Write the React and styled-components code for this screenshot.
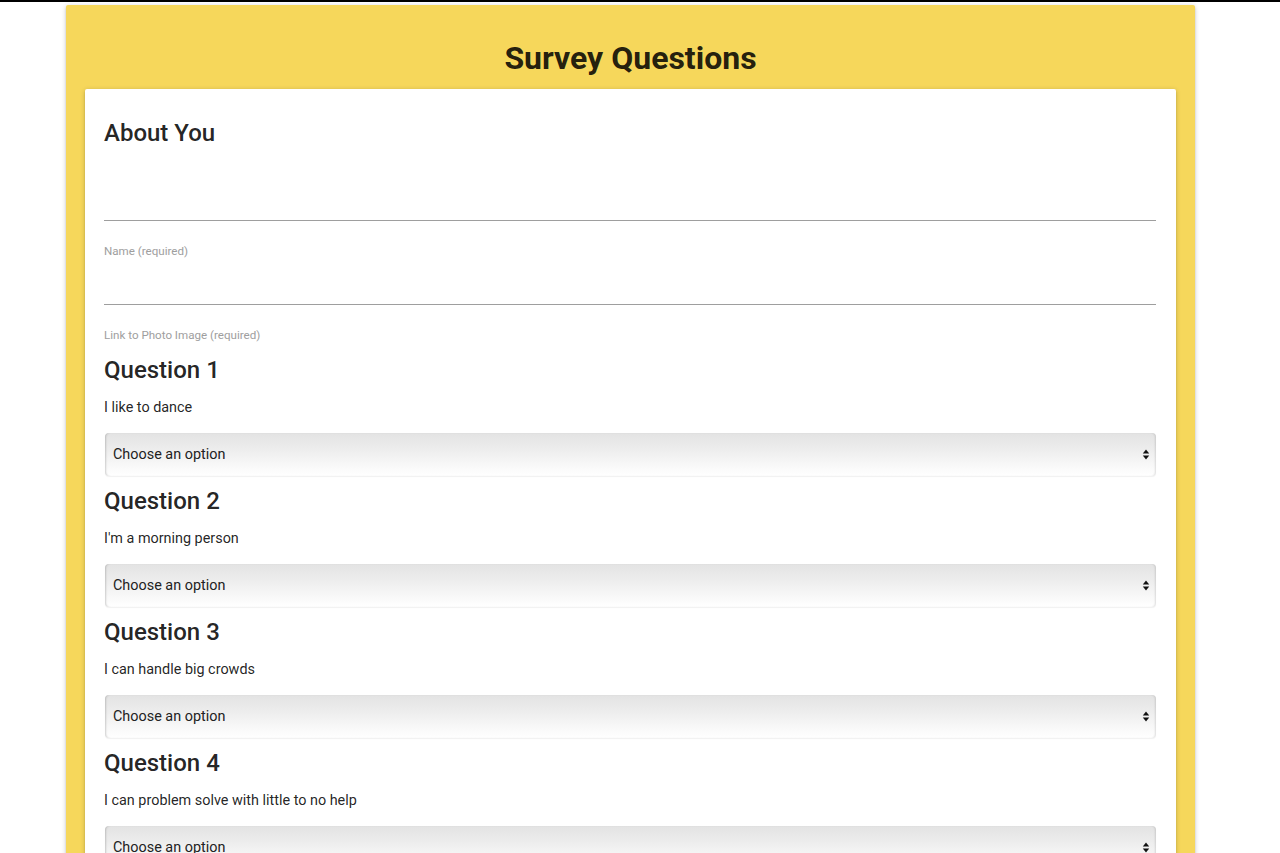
import React from "react";
import styled, { createGlobalStyle } from "styled-components";

const GlobalStyle = createGlobalStyle`
  html, body { margin: 0; padding: 0; background: #ffffff; }
  body { font-family: Roboto, "Liberation Sans", Arial, sans-serif; color: rgba(0,0,0,0.87); }
  * { box-sizing: border-box; }
`;

const TopBar = styled.div`
  height: 2px;
  background: #000;
`;

const Page = styled.div`
  padding: 3px 0 0 66px;
`;

const Panel = styled.section`
  width: 1129px;
  background: #f6d75b;
  border-radius: 2px;
  box-shadow: 0 2px 2px 0 rgba(0,0,0,0.14), 0 3px 1px -2px rgba(0,0,0,0.12), 0 1px 5px 0 rgba(0,0,0,0.2);
  padding: 0 19px 40px 19px;
`;

const Title = styled.h1`
  margin: 0;
  height: 84px;
  display: flex;
  align-items: flex-end;
  justify-content: center;
  padding-bottom: 13px;
  font-size: 32px;
  line-height: 36px;
  font-weight: 700;
  color: rgba(0,0,0,0.87);
`;

const Card = styled.form`
  background: #fff;
  border-radius: 2px;
  box-shadow: 0 2px 2px 0 rgba(0,0,0,0.14), 0 3px 1px -2px rgba(0,0,0,0.12), 0 1px 5px 0 rgba(0,0,0,0.2);
  padding: 30px 20px 30px 19px;
  display: flex;
  flex-direction: column;
`;

const SectionTitle = styled.h2`
  margin: 0;
  font-size: 24px;
  line-height: 28px;
  font-weight: 500;
  color: rgba(0,0,0,0.87);
`;

const TextInput = styled.input`
  display: block;
  width: 100%;
  height: 46px;
  margin-top: ${p => p.$top}px;
  border: none;
  border-bottom: 1px solid #9e9e9e;
  background: transparent;
  outline: none;
  font: inherit;
  font-size: 16px;
  padding: 0;
`;

const FieldLabel = styled.label`
  display: block;
  margin-top: 22px;
  font-size: 11.6px;
  line-height: 16px;
  color: #9e9e9e;
`;

const QuestionBlock = styled.div`
  display: flex;
  flex-direction: column;
  margin-top: ${p => p.$top}px;
`;

const Prompt = styled.p`
  margin: 14px 0 0 0;
  font-size: 14.4px;
  line-height: 20px;
  color: rgba(0,0,0,0.87);
`;

const SelectWrap = styled.div`
  position: relative;
  margin: 15px 0 0 1px;
`;

const Select = styled.select`
  appearance: none;
  -webkit-appearance: none;
  display: block;
  width: 100%;
  height: 43px;
  border: none;
  border-radius: 4px;
  padding: 0 30px 0 8px;
  font-family: Roboto, "Liberation Sans", Arial, sans-serif;
  font-size: 14.4px;
  color: #222;
  background: linear-gradient(to bottom, #e3e3e3 0%, #ececec 35%, #f8f8f8 75%, #ffffff 100%);
  box-shadow: inset 2px 0 2px -1px rgba(0,0,0,0.18), inset -2px 0 2px -1px rgba(0,0,0,0.12), 0 1px 1px rgba(0,0,0,0.06);
  outline: none;
`;

const Arrows = styled.svg`
  position: absolute;
  right: 6px;
  top: 16px;
  width: 8px;
  height: 11px;
  pointer-events: none;
`;

const questions = [
  "I like to dance",
  "I'm a morning person",
  "I can handle big crowds",
  "I can problem solve with little to no help",
  "I enjoy meeting new people",
  "I like to plan ahead",
  "I prefer working in a team",
  "I enjoy outdoor activities",
  "I like trying new foods",
  "I stay calm under pressure",
];

function Question({ n, text, top }) {
  return (
    <QuestionBlock $top={top}>
      <SectionTitle>Question {n}</SectionTitle>
      <Prompt>{text}</Prompt>
      <SelectWrap>
        <Select defaultValue="">
          <option value="">Choose an option</option>
          <option value="1">1 (Strongly Disagree)</option>
          <option value="2">2</option>
          <option value="3">3</option>
          <option value="4">4</option>
          <option value="5">5 (Strongly Agree)</option>
        </Select>
        <Arrows viewBox="0 0 8 11">
          <path d="M4 0.5 L7.2 4.5 L0.8 4.5 Z" fill="#111" />
          <path d="M4 10.5 L7.2 6.5 L0.8 6.5 Z" fill="#111" />
        </Arrows>
      </SelectWrap>
    </QuestionBlock>
  );
}

export default function App() {
  return (
    <>
      <GlobalStyle />
      <TopBar />
      <Page>
        <Panel>
          <Title>Survey Questions</Title>
          <Card onSubmit={e => e.preventDefault()}>
            <SectionTitle>About You</SectionTitle>
            <TextInput id="name" $top={28} />
            <FieldLabel htmlFor="name">Name (required)</FieldLabel>
            <TextInput id="photo" $top={0} />
            <FieldLabel htmlFor="photo">Link to Photo Image (required)</FieldLabel>
            {questions.map((q, i) => (
              <Question key={i} n={i + 1} text={q} top={i === 0 ? 13 : 11} />
            ))}
          </Card>
        </Panel>
      </Page>
    </>
  );
}
